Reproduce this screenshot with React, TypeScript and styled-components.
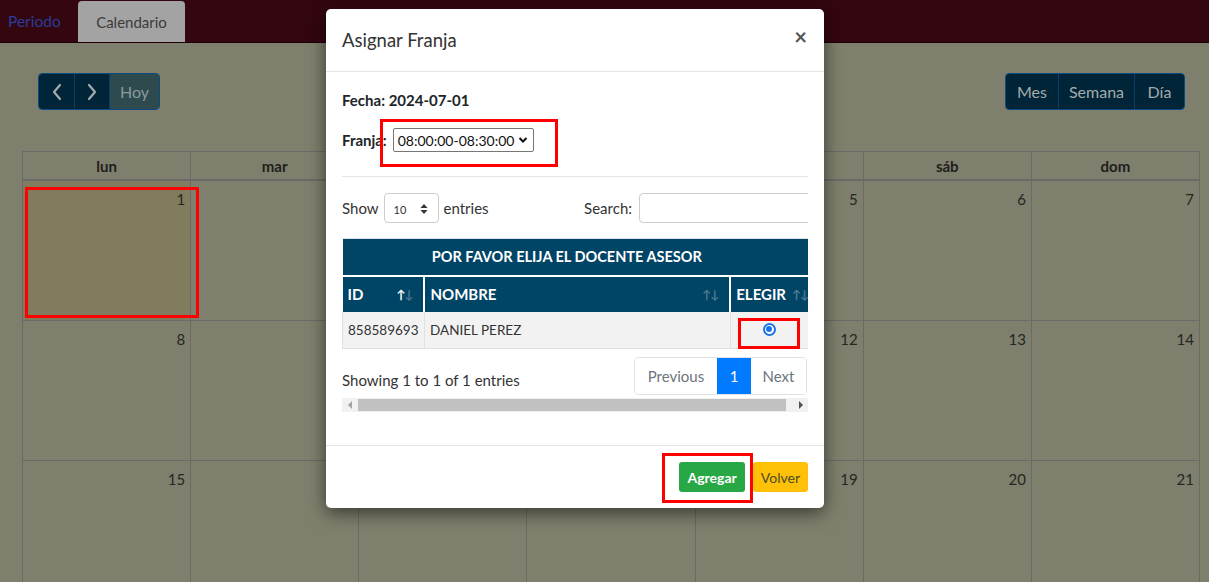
import React from "react";
import styled, { createGlobalStyle } from "styled-components";

const GlobalStyle = createGlobalStyle`
  html, body {
    margin: 0;
    padding: 0;
    background: #7e7f6c;
    font-family: "Lato", "Liberation Sans", sans-serif;
  }
  * { box-sizing: border-box; }
`;

const Page = styled.div`
  position: relative;
  width: 1209px;
  height: 582px;
  overflow: hidden;
  background: #7e7f6c;
`;

const TopBar = styled.div`
  height: 43px;
  background: #330610;
  border-bottom: 1px solid #1c0208;
  display: flex;
  align-items: flex-end;
  padding-left: 8px;
`;

const NavLink = styled.div`
  color: #2a3c9c;
  font-size: 15.5px;
  height: 42px;
  display: flex;
  align-items: center;
  width: 70px;
`;

const Tab = styled.div`
  background: #a3a3a3;
  color: #3b3b3b;
  font-size: 15px;
  height: 41px;
  width: 107px;
  border-radius: 4px 4px 0 0;
  display: flex;
  align-items: center;
  justify-content: center;
`;

const CalendarArea = styled.div`
  padding: 30px 9px 0 22px;
`;

const Toolbar = styled.div`
  display: flex;
  justify-content: space-between;
  padding: 0 15px 0 16px;
  margin-bottom: 41px;
`;

const BtnGroup = styled.div`
  display: flex;
  border: 1px solid #0b4a7f;
  border-radius: 4px;
  overflow: hidden;
  height: 37px;
`;

const CalBtn = styled.div<{ $w: number; $muted?: boolean }>`
  width: ${(p) => p.$w}px;
  background: ${(p) => (p.$muted ? "#2e4a4f" : "#002538")};
  color: ${(p) => (p.$muted ? "#8b9a9a" : "#a3abab")};
  font-size: 16px;
  display: flex;
  align-items: center;
  justify-content: center;
  & + & {
    border-left: 1px solid #0b3f6a;
  }
`;

const Grid = styled.div`
  display: grid;
  grid-template-columns: repeat(7, 1fr);
  border-left: 1px solid #6a6b68;
  border-top: 1px solid #6a6b68;
`;

const HeadCell = styled.div`
  height: 29px;
  border-right: 1px solid #6a6b68;
  border-bottom: 2px solid #6a6b68;
  font-weight: 700;
  font-size: 15px;
  color: #1e1e1c;
  display: flex;
  align-items: center;
  justify-content: center;
`;

const DayCell = styled.div<{ $today?: boolean }>`
  height: 140px;
  border-right: 1px solid #6a6b68;
  border-bottom: 1px solid #6a6b68;
  background: ${(p) => (p.$today ? "#807c5d" : "transparent")};
  color: #262624;
  font-size: 15px;
  text-align: right;
  padding: 9px 5px 0 0;
`;

const Highlight = styled.div<{ $l: number; $t: number; $w: number; $h: number }>`
  position: absolute;
  left: ${(p) => p.$l}px;
  top: ${(p) => p.$t}px;
  width: ${(p) => p.$w}px;
  height: ${(p) => p.$h}px;
  border: 3px solid #ff0000;
  pointer-events: none;
`;

const Modal = styled.div`
  position: absolute;
  left: 326px;
  top: 9px;
  width: 498px;
  background: #fff;
  border-radius: 5px;
  box-shadow: 0 5px 18px rgba(0, 0, 0, 0.55);
  color: #212529;
`;

const ModalHeader = styled.div`
  height: 63px;
  padding: 0 16px;
  border-bottom: 1px solid #e5e5e5;
  display: flex;
  align-items: center;
  justify-content: space-between;
`;

const Title = styled.div`
  font-size: 18.5px;
  color: #333;
`;

const Close = styled.div`
  font-size: 22px;
  font-weight: 700;
  color: #555;
  line-height: 1;
  margin-top: -6px;
  margin-right: 1px;
`;

const ModalBody = styled.div`
  padding: 16px 16px 33px;
`;

const Fecha = styled.div`
  font-weight: 700;
  font-size: 15px;
  line-height: 24px;
  margin-bottom: 16px;
`;

const FranjaRow = styled.div`
  display: flex;
  align-items: center;
  gap: 6px;
  height: 24px;
  font-weight: 700;
  font-size: 15px;
`;

const TimeSelect = styled.div`
  height: 24px;
  width: 141px;
  border: 1px solid #767676;
  border-radius: 2px;
  font-weight: 400;
  font-size: 14px;
  display: flex;
  align-items: center;
  justify-content: space-between;
  padding: 0 5px 0 4px;
  color: #111;
`;

const Rule = styled.div`
  height: 1px;
  background: #e5e5e5;
  margin: 24px 0 16px;
`;

const Scroller = styled.div`
  width: 466px;
  overflow: hidden;
`;

const Controls = styled.div`
  display: flex;
  justify-content: space-between;
  align-items: center;
  height: 30px;
  width: 477px;
  font-size: 15px;
  color: #333;
  margin-bottom: 15px;
`;

const Inline = styled.div`
  display: flex;
  align-items: center;
  gap: 5px;
`;

const LengthSelect = styled.div`
  width: 55px;
  height: 30px;
  border: 1px solid #ccc;
  border-radius: 4px;
  font-size: 11px;
  color: #333;
  display: flex;
  align-items: center;
  justify-content: space-between;
  padding: 2px 10px 0 9px;
`;

const SearchInput = styled.div`
  width: 180px;
  height: 30px;
  border: 1px solid #ccc;
  border-radius: 4px;
  margin-left: 2px;
`;

const Table = styled.table`
  width: 490px;
  border-collapse: collapse;
  border-top: 1px solid #dee2e6;
  font-size: 13.5px;
`;

const Caption = styled.th`
  background: #004466;
  color: #fff;
  height: 37px;
  font-weight: 700;
  font-size: 14.5px;
  text-align: center;
  padding: 0 40px 0 0;
  border-bottom: 2px solid #fff;
`;

const ColHead = styled.th<{ $w: number }>`
  position: relative;
  width: ${(p) => p.$w}px;
  background: #004466;
  color: #fff;
  height: 36px;
  font-weight: 700;
  font-size: 15px;
  text-align: left;
  padding: 0 5px;
  border-right: 2px solid #fff;
`;

const SortIcon = styled.span<{ $right: number }>`
  position: absolute;
  right: ${(p) => p.$right}px;
  top: 12px;
  display: flex;
  font-size: 12px;
  font-weight: 700;
  line-height: 1;
`;

const Arrow = styled.span<{ $on?: boolean }>`
  color: ${(p) => (p.$on ? "#ffffff" : "#4d7a91")};
  margin-left: -1px;
`;

const Cell = styled.td<{ $center?: boolean }>`
  background: #f2f2f2;
  height: 37px;
  padding: 0 4px 0 5px;
  border-right: 1px solid #dee2e6;
  border-bottom: 1px solid #dee2e6;
  color: #333;
  white-space: nowrap;
  text-align: ${(p) => (p.$center ? "center" : "left")};
  padding-right: ${(p) => (p.$center ? "28px" : "4px")};
  &:first-child {
    border-left: 1px solid #dee2e6;
  }
`;

const Radio = styled.span`
  display: inline-block;
  width: 13px;
  height: 13px;
  border-radius: 50%;
  border: 2px solid #1a73e8;
  background: #fff;
  position: relative;
  top: 1px;
  &::after {
    content: "";
    position: absolute;
    inset: 1.5px;
    border-radius: 50%;
    background: #1a73e8;
  }
`;

const InfoRow = styled.div`
  display: flex;
  justify-content: space-between;
  align-items: flex-end;
  margin-top: 8px;
  padding-right: 1px;
`;

const Info = styled.div`
  font-size: 15px;
  color: #333;
  padding-bottom: 6px;
`;

const Pager = styled.div`
  display: flex;
  height: 38px;
  border: 1px solid #dee2e6;
  border-radius: 4px;
  overflow: hidden;
`;

const PageBtn = styled.div<{ $active?: boolean; $w: number }>`
  width: ${(p) => p.$w}px;
  display: flex;
  align-items: center;
  justify-content: center;
  font-size: 15px;
  background: ${(p) => (p.$active ? "#007bff" : "#fff")};
  color: ${(p) => (p.$active ? "#fff" : "#6c757d")};
`;

const FakeScrollbar = styled.div`
  margin-top: 3px;
  height: 14px;
  background: #f1f1f1;
  display: flex;
  align-items: center;
`;

const ScrollArrow = styled.div`
  width: 16px;
  display: flex;
  justify-content: center;
  align-items: center;
`;

const Thumb = styled.div`
  flex: 1;
  height: 12px;
  background: #c1c1c1;
  margin-right: 6px;
`;

const ModalFooter = styled.div`
  border-top: 1px solid #e5e5e5;
  padding: 16px;
  display: flex;
  justify-content: flex-end;
  gap: 8px;
`;

const ActionBtn = styled.div<{ $variant: "success" | "warning" }>`
  height: 30px;
  padding: 0 8px;
  border-radius: 3px;
  display: flex;
  align-items: center;
  font-size: 14px;
  background: ${(p) => (p.$variant === "success" ? "#28a745" : "#ffc107")};
  color: ${(p) => (p.$variant === "success" ? "#fff" : "#4a4a2a")};
  font-weight: ${(p) => (p.$variant === "success" ? 700 : 400)};
`;

const Chevron = ({ dir }: { dir: "left" | "right" }) => (
  <svg width="12" height="18" viewBox="0 0 12 18">
    <path
      d={dir === "left" ? "M9 2 L3 9 L9 16" : "M3 2 L9 9 L3 16"}
      fill="none"
      stroke="#a3abab"
      strokeWidth="2.2"
      strokeLinecap="round"
      strokeLinejoin="round"
    />
  </svg>
);

const weeks = [
  [1, 2, 3, 4, 5, 6, 7],
  [8, 9, 10, 11, 12, 13, 14],
  [15, 16, 17, 18, 19, 20, 21],
];
const dayNames = ["lun", "mar", "mié", "jue", "vie", "sáb", "dom"];

export default function App() {
  return (
    <Page>
      <GlobalStyle />
      <TopBar>
        <NavLink>Periodo</NavLink>
        <Tab>Calendario</Tab>
      </TopBar>

      <CalendarArea>
        <Toolbar>
          <BtnGroup>
            <CalBtn $w={35}>
              <Chevron dir="left" />
            </CalBtn>
            <CalBtn $w={35}>
              <Chevron dir="right" />
            </CalBtn>
            <CalBtn $w={50} $muted>
              Hoy
            </CalBtn>
          </BtnGroup>
          <BtnGroup>
            <CalBtn $w={52}>Mes</CalBtn>
            <CalBtn $w={76}>Semana</CalBtn>
            <CalBtn $w={50}>Día</CalBtn>
          </BtnGroup>
        </Toolbar>
        <Grid>
          {dayNames.map((d) => (
            <HeadCell key={d}>{d}</HeadCell>
          ))}
          {weeks.flat().map((n) => (
            <DayCell key={n} $today={n === 1}>
              {n}
            </DayCell>
          ))}
        </Grid>
      </CalendarArea>

      <Highlight $l={25} $t={187} $w={174} $h={131} />

      <Modal>
        <ModalHeader>
          <Title>Asignar Franja</Title>
          <Close>×</Close>
        </ModalHeader>
        <ModalBody>
          <Fecha>Fecha: 2024-07-01</Fecha>
          <FranjaRow>
            Franja:
            <TimeSelect>
              08:00:00-08:30:00
              <svg width="10" height="8" viewBox="0 0 10 8">
                <path d="M1.5 2 L5 5.5 L8.5 2" fill="none" stroke="#111" strokeWidth="2" />
              </svg>
            </TimeSelect>
          </FranjaRow>
          <Rule />
          <Scroller>
            <Controls>
              <Inline>
                Show
                <LengthSelect>
                  10
                  <svg width="8" height="12" viewBox="0 0 8 12">
                    <path d="M4 1 L7.5 5 H0.5 Z M4 11 L7.5 7 H0.5 Z" fill="#333" />
                  </svg>
                </LengthSelect>
                entries
              </Inline>
              <Inline>
                Search:
                <SearchInput />
              </Inline>
            </Controls>
            <Table>
              <thead>
                <tr>
                  <Caption colSpan={3}>POR FAVOR ELIJA EL DOCENTE ASESOR</Caption>
                </tr>
                <tr>
                  <ColHead $w={82}>
                    ID
                    <SortIcon $right={10}>
                      <Arrow $on>↑</Arrow>
                      <Arrow>↓</Arrow>
                    </SortIcon>
                  </ColHead>
                  <ColHead $w={307}>
                    NOMBRE
                    <SortIcon $right={10}>
                      <Arrow>↑</Arrow>
                      <Arrow>↓</Arrow>
                    </SortIcon>
                  </ColHead>
                  <ColHead $w={101}>
                    ELEGIR
                    <SortIcon $right={21}>
                      <Arrow>↑</Arrow>
                      <Arrow>↓</Arrow>
                    </SortIcon>
                  </ColHead>
                </tr>
              </thead>
              <tbody>
                <tr>
                  <Cell>858589693</Cell>
                  <Cell>DANIEL PEREZ</Cell>
                  <Cell $center>
                    <Radio />
                  </Cell>
                </tr>
              </tbody>
            </Table>
          </Scroller>
          <InfoRow>
            <Info>Showing 1 to 1 of 1 entries</Info>
            <Pager>
              <PageBtn $w={82}>Previous</PageBtn>
              <PageBtn $w={34} $active>
                1
              </PageBtn>
              <PageBtn $w={55}>Next</PageBtn>
            </Pager>
          </InfoRow>
          <FakeScrollbar>
            <ScrollArrow>
              <svg width="5" height="8" viewBox="0 0 5 8">
                <path d="M4 0 L0 4 L4 8 Z" fill="#a3a3a3" />
              </svg>
            </ScrollArrow>
            <Thumb />
            <ScrollArrow>
              <svg width="5" height="8" viewBox="0 0 5 8">
                <path d="M1 0 L5 4 L1 8 Z" fill="#505050" />
              </svg>
            </ScrollArrow>
          </FakeScrollbar>
        </ModalBody>
        <ModalFooter>
          <ActionBtn $variant="success">Agregar</ActionBtn>
          <ActionBtn $variant="warning">Volver</ActionBtn>
        </ModalFooter>
        <Highlight $l={54} $t={110} $w={178} $h={48} />
        <Highlight $l={412} $t={309} $w={62} $h={31} />
        <Highlight $l={336} $t={444} $w={91} $h={50} />
      </Modal>
    </Page>
  );
}
